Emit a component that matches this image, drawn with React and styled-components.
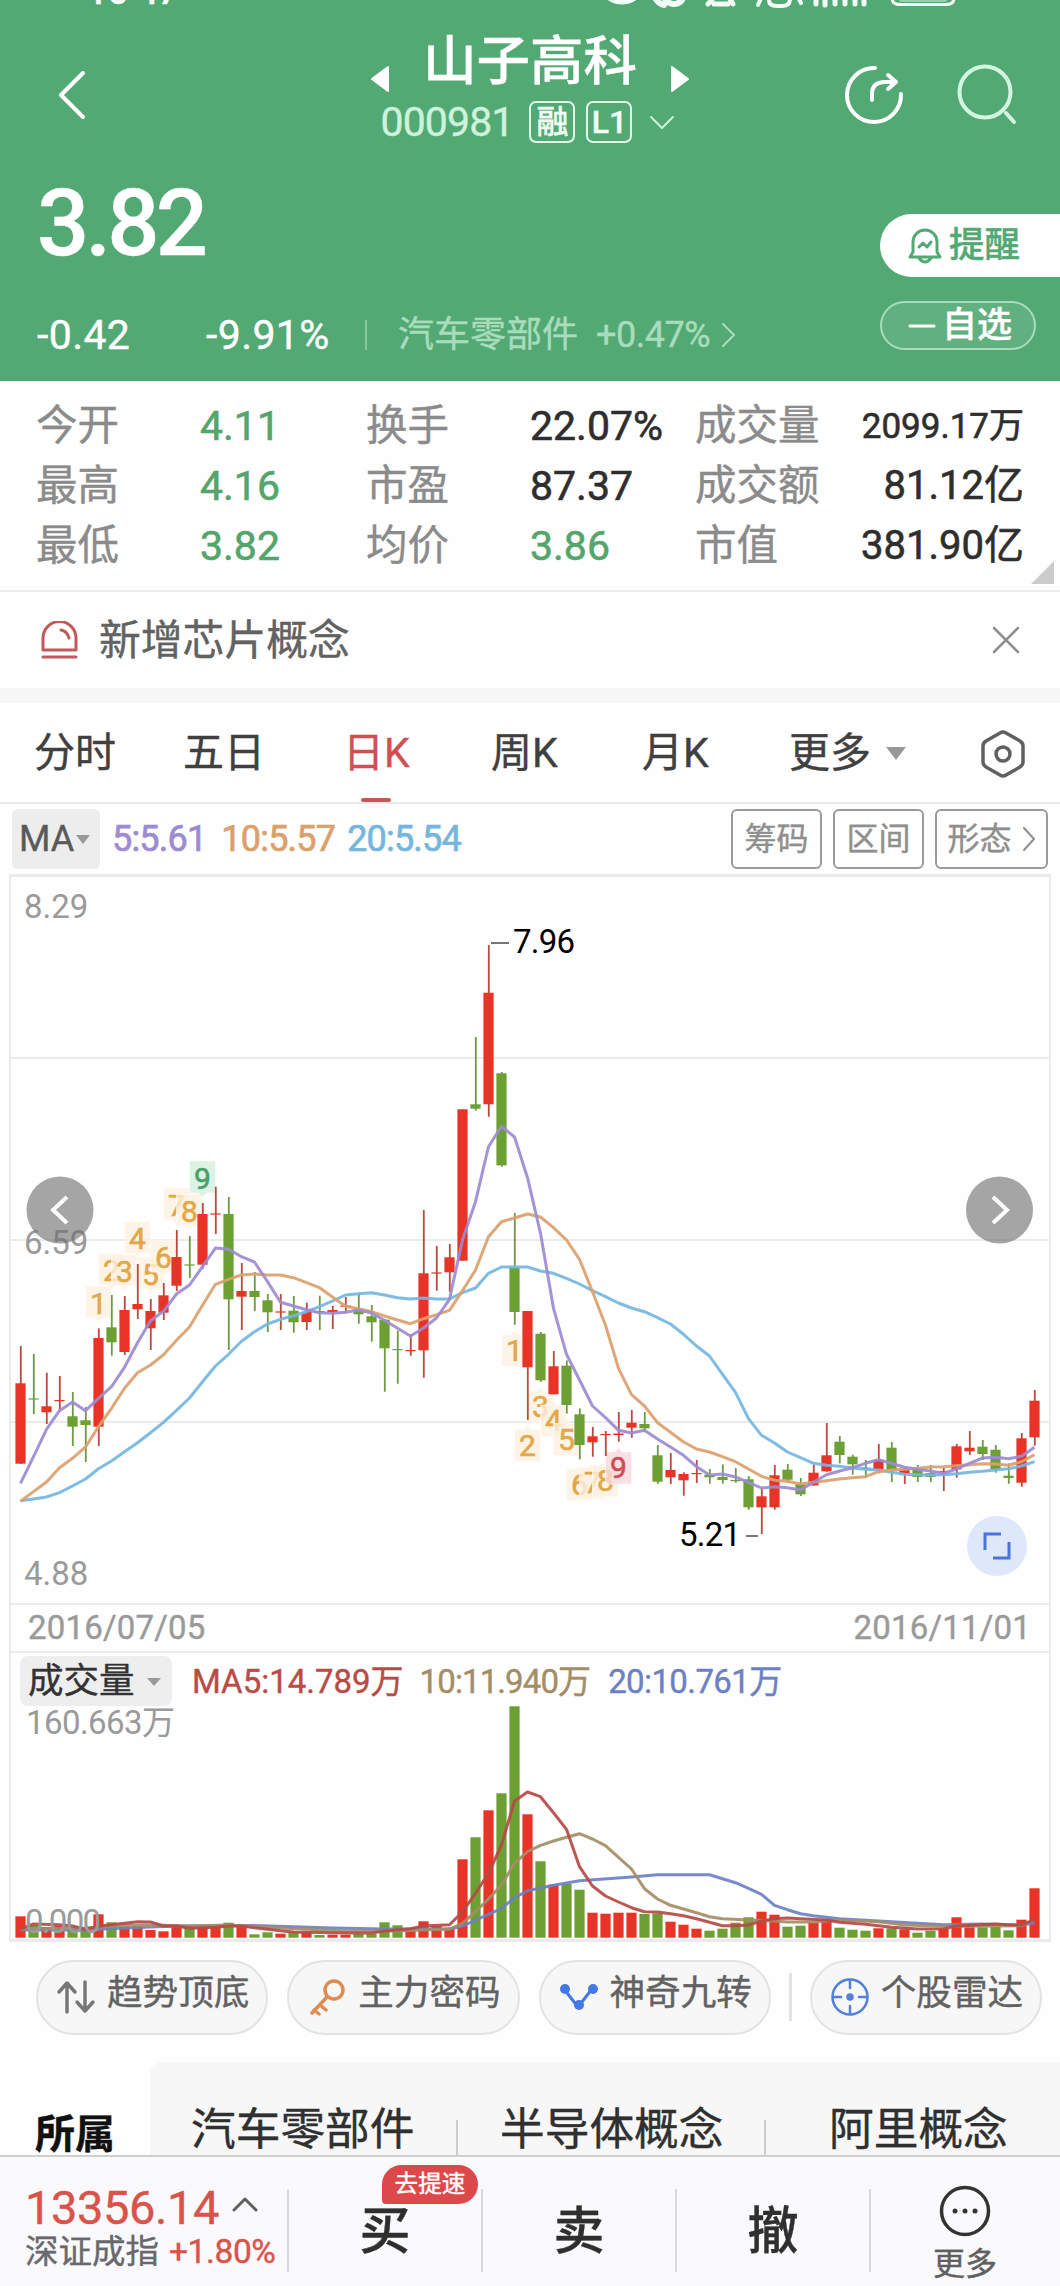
import React from 'react';
import styled, { createGlobalStyle } from 'styled-components';

const GlobalStyle = createGlobalStyle`
  * {
    box-sizing: border-box;
  }
  body {
    margin: 0;
    background: #fff;
    font-family: Roboto, 'Noto Sans CJK SC', sans-serif;
    line-height: 1;
    color: #333;
    -webkit-text-stroke: 0.4px;
  }
  svg {
    display: block;
    flex: none;
  }
`;

const UP = '#e73427';
const DOWN = '#6ca032';
const UP_WICK = '#b94a40';
const DOWN_WICK = '#6f9a44';

// [direction, high, low, bodyTop, bodyBottom]
const candles = [
  [1, 1346, 1463.7, 1383.3, 1463.7],
  [0, 1354, 1414, 1398.4, 1399.6],
  [1, 1372.7, 1424, 1406.3, 1412.3],
  [1, 1376, 1410, 1400, 1401.2],
  [0, 1392, 1446, 1416.3, 1426.7],
  [0, 1407, 1462, 1420.3, 1425],
  [1, 1328.3, 1446, 1338, 1426.7],
  [0, 1295, 1355.7, 1327.3, 1342.3],
  [1, 1296, 1355, 1310, 1352],
  [1, 1264, 1319, 1304, 1309.3],
  [1, 1299, 1350, 1311, 1328.3],
  [1, 1283, 1320, 1295.3, 1312.7],
  [1, 1230, 1291, 1257, 1285.7],
  [0, 1236, 1278, 1264.4, 1265.6],
  [1, 1203, 1268.7, 1214, 1264.7],
  [1, 1186.7, 1234, 1213.4, 1214.6],
  [0, 1197, 1350, 1214, 1299.3],
  [1, 1263, 1330, 1291, 1296.7],
  [0, 1272, 1311, 1291, 1297],
  [0, 1294, 1332, 1300.3, 1312.3],
  [1, 1294, 1330, 1311.4, 1312.6],
  [0, 1296, 1332.7, 1310.7, 1322.3],
  [1, 1302.7, 1330, 1312, 1322],
  [0, 1295.7, 1330, 1311, 1312.2],
  [1, 1305.7, 1329, 1310, 1312],
  [1, 1297, 1313.3, 1305.5, 1306.7],
  [0, 1294, 1323.7, 1309.3, 1314.3],
  [0, 1305, 1341.7, 1316.3, 1322.3],
  [0, 1319, 1391.7, 1319.7, 1348.3],
  [0, 1330.7, 1383.7, 1349, 1350.2],
  [1, 1334, 1355.7, 1350, 1351.2],
  [1, 1210, 1377.7, 1273.3, 1350.3],
  [1, 1246, 1290.7, 1272.4, 1273.6],
  [1, 1244, 1291.7, 1257.3, 1272.3],
  [1, 1109.3, 1260.7, 1109.3, 1260.7],
  [0, 1037, 1110.7, 1104.3, 1108.7],
  [1, 945, 1116.7, 992.7, 1104.3],
  [0, 1072, 1166.7, 1073.3, 1165.3],
  [0, 1213, 1324.7, 1267.7, 1312],
  [1, 1311, 1420, 1311, 1367.3],
  [0, 1332, 1381.7, 1333.7, 1380.3],
  [1, 1351, 1394.3, 1366.3, 1394.3],
  [0, 1360.3, 1413.7, 1365.7, 1405],
  [0, 1408.3, 1459.3, 1414.3, 1445],
  [1, 1427, 1456.7, 1436.3, 1442.3],
  [1, 1431, 1456, 1434, 1435.2],
  [1, 1412, 1441.7, 1433.5, 1435],
  [1, 1410, 1437.7, 1422.7, 1427.7],
  [0, 1412, 1432.3, 1424, 1428.3],
  [0, 1445, 1483.7, 1455.3, 1481.7],
  [1, 1453, 1484, 1470, 1477.3],
  [1, 1472.3, 1495.7, 1474, 1480.3],
  [1, 1460, 1483, 1473, 1474.2],
  [0, 1469, 1483.7, 1474.7, 1477.3],
  [0, 1464.3, 1483.7, 1477, 1480],
  [0, 1468, 1482.7, 1480, 1481.2],
  [0, 1476, 1509.7, 1479.3, 1507.3],
  [1, 1488.7, 1534, 1496.3, 1507.3],
  [1, 1465, 1509.7, 1475.3, 1507.3],
  [0, 1464, 1482.7, 1469.7, 1479.7],
  [0, 1478, 1496, 1483.7, 1494.3],
  [1, 1464.7, 1485.7, 1472.7, 1485.3],
  [1, 1423, 1471.7, 1455.3, 1471.3],
  [0, 1436, 1463.3, 1441.7, 1455],
  [0, 1454.7, 1474.7, 1456.7, 1464.3],
  [0, 1460, 1477.3, 1467.5, 1468.7],
  [1, 1444, 1473.3, 1460, 1469.7],
  [0, 1442, 1482, 1447.7, 1470],
  [1, 1466.7, 1484, 1469.3, 1474],
  [0, 1465, 1482, 1469.3, 1477],
  [0, 1465, 1482, 1473, 1477],
  [1, 1468, 1491, 1471, 1472.2],
  [1, 1444, 1477.7, 1446.3, 1469.3],
  [1, 1431, 1455, 1447.7, 1451.3],
  [0, 1440, 1460, 1446.7, 1454],
  [0, 1445, 1472.7, 1449.7, 1469.3],
  [0, 1463.3, 1483.7, 1475.7, 1478],
  [1, 1433, 1486.7, 1438.3, 1482.7],
  [1, 1390, 1445.7, 1400.7, 1437.3]
];

const volumes = [
  1916.3, 1925, 1927, 1926, 1928.5, 1928.5, 1914.3, 1922.3, 1927, 1926, 1930,
  1931.3, 1925, 1927, 1925, 1927, 1922.7, 1925.7, 1934.3, 1932.3, 1933.7, 1932,
  1932, 1935, 1934.7, 1934.7, 1934, 1934, 1922.3, 1925.3, 1930.7, 1921.3, 1926,
  1928, 1859.3, 1837.3, 1810.3, 1793.3, 1706.3, 1814.3, 1861.3, 1884.7, 1884,
  1889.7, 1912.7, 1913.7, 1912.7, 1912.7, 1914, 1913.3, 1921.7, 1924.7, 1928.7,
  1930.7, 1928.7, 1922.7, 1917.3, 1911.7, 1914.7, 1926.7, 1925.7, 1922.7,
  1919.3, 1927.7, 1929.7, 1930.7, 1928.3, 1928.3, 1929.3, 1932.7, 1930.7,
  1928.7, 1917.3, 1927.3, 1927.3, 1926.7, 1930.3, 1919.7, 1888.3
];

const ma5 = [
  1483.3, 1456.7, 1429.3, 1410.7, 1402, 1410.7, 1398.3, 1386.7, 1367.3, 1342.7,
  1320.7, 1311.3, 1294, 1285, 1266.7, 1248, 1249.3, 1256.7, 1262, 1281.7,
  1302.3, 1306, 1309.7, 1312.7, 1313.3, 1312.3, 1310, 1313, 1320.3, 1328.3,
  1336, 1328, 1318, 1299.3, 1240, 1201.7, 1146.7, 1126.3, 1137, 1177.7, 1233.3,
  1308.3, 1354.3, 1380, 1406, 1417.7, 1430.3, 1433, 1430.3, 1439, 1447, 1455.3,
  1466.7, 1475, 1474, 1477, 1482.3, 1488, 1486.7, 1487.7, 1490, 1482.3, 1474.7,
  1471, 1467.7, 1463.3, 1459.7, 1463.3, 1467.3, 1469.3, 1471, 1473.3, 1469,
  1463.3, 1458, 1457.3, 1458.7, 1456.3, 1447.3
];

const ma10 = [
  1501.3, 1491.6, 1482, 1467.7, 1458.3, 1447, 1426.7, 1408.3, 1388.3, 1372.7,
  1365, 1354.7, 1340.3, 1327, 1305.3, 1284.3, 1279.3, 1275, 1274, 1275, 1275,
  1277.7, 1282.7, 1287.7, 1297, 1306.3, 1308.7, 1311.7, 1316, 1320, 1323.7,
  1318.7, 1314.7, 1310.3, 1290.7, 1270, 1236.7, 1221.7, 1218, 1214, 1217,
  1227.7, 1240, 1259.3, 1291.7, 1325.3, 1368.3, 1394.7, 1406, 1422.7, 1432.3,
  1442, 1449, 1452, 1456.7, 1461.7, 1469, 1476.3, 1480.3, 1481.3, 1484, 1482.3,
  1480.7, 1479, 1477.7, 1476.7, 1471.7, 1470, 1469.3, 1468.3, 1467, 1466.7,
  1465.7, 1464.7, 1463.7, 1464, 1465.3, 1461.7, 1454.7
];

const ma20 = [
  1500.7, 1499, 1497, 1492.7, 1486, 1479, 1468.7, 1461, 1451.7, 1442.7, 1432.7,
  1422.3, 1410.3, 1398, 1381.7, 1366, 1354.3, 1341.3, 1331.7, 1324, 1319.3,
  1315.7, 1311.7, 1306.7, 1301, 1295, 1293.7, 1292.7, 1295, 1297.7, 1299, 1298,
  1299, 1299, 1292.7, 1288, 1273.3, 1267, 1267, 1267, 1271, 1273.3, 1278.3,
  1284, 1290.7, 1296.7, 1303, 1308, 1311.7, 1317.7, 1324, 1334.3, 1346, 1356,
  1374.3, 1392.3, 1418.7, 1435.3, 1443, 1452, 1457.7, 1463.3, 1465.3, 1466.3,
  1468, 1469.3, 1470, 1472.3, 1474.3, 1474.7, 1475, 1474.7, 1473.7, 1472.3,
  1471.3, 1470, 1468.7, 1466, 1461.7
];

// volume averages, [index, y]
const vol5 = [
  [0, 1929], [1, 1924], [3, 1924.7], [4, 1926], [5, 1929.3], [6, 1926.3],
  [8, 1923.3], [9, 1921.7], [10, 1922], [11, 1926], [12, 1926], [13, 1928.3],
  [15, 1927.3], [16, 1926], [17, 1926], [18, 1927.7], [20, 1930.7], [21, 1932],
  [25, 1933], [27, 1933], [28, 1931], [30, 1928.7], [31, 1926], [33, 1924.7],
  [34, 1911.7], [35, 1893.3], [36, 1873.3], [37, 1845], [38, 1801], [39, 1792],
  [40, 1796.7], [41, 1812.7], [42, 1829.3], [43, 1866.7], [44, 1886],
  [45, 1896], [46, 1902], [47, 1907.7], [48, 1911.7], [49, 1912], [50, 1913.7],
  [51, 1915.7], [52, 1918.7], [53, 1922.3], [54, 1925.7], [55, 1925.7],
  [56, 1925], [57, 1921], [58, 1918.7], [59, 1918], [60, 1918.7], [62, 1920],
  [63, 1922.3], [65, 1924.3], [66, 1925.7], [67, 1927.3], [69, 1929],
  [71, 1928.7], [72, 1926], [75, 1924], [76, 1924.7], [77, 1925], [78, 1919.3]
];

const vol10 = [
  [0, 1929], [5, 1928], [8, 1925.5], [10, 1925], [13, 1926], [16, 1925],
  [20, 1928], [25, 1931], [29, 1931], [33, 1929], [34, 1923.3], [35, 1911.7],
  [36, 1899], [37, 1885], [38, 1863.3], [39, 1851.7], [40, 1845.3], [41, 1841],
  [42, 1837.3], [43, 1833.7], [44, 1839], [45, 1845.7], [46, 1857.3],
  [47, 1869], [48, 1888.7], [49, 1899], [50, 1905.3], [51, 1909], [52, 1912.7],
  [53, 1916.7], [54, 1918.7], [56, 1920], [58, 1921], [59, 1922], [61, 1922],
  [63, 1920], [66, 1921.7], [68, 1925], [71, 1926.3], [75, 1926], [77, 1925.7],
  [78, 1920]
];

const vol20 = [
  [0, 1930], [5, 1930], [8, 1928], [12, 1926], [18, 1925.5], [24, 1928],
  [28, 1929], [33, 1929], [34, 1926], [36, 1914.3], [37, 1908.3], [38, 1897.7],
  [39, 1890.7], [41, 1885.3], [43, 1880.7], [47, 1877], [49, 1874.7],
  [53, 1874.7], [54, 1878.7], [55, 1882.7], [56, 1888.3], [57, 1894.3],
  [58, 1905.3], [59, 1909.7], [60, 1913.7], [61, 1915.7], [63, 1918.7],
  [66, 1921], [69, 1923.3], [71, 1924.7], [74, 1924], [77, 1925], [78, 1923]
];

// nine-turn marks: [label, candle index, box top]
const marksAbove = [
  ['1', 6, 1286], ['2', 7, 1253.3], ['3', 8, 1254.3], ['4', 9, 1221.3],
  ['5', 10, 1257], ['6', 11, 1240], ['7', 12, 1188], ['8', 13, 1194],
  ['9', 14, 1161]
];
const marksBelow = [
  ['1', 38, 1334.5], ['2', 39, 1429.5], ['3', 40, 1391], ['4', 41, 1405],
  ['5', 42, 1423.5], ['6', 43, 1469], ['7', 44, 1467], ['8', 45, 1465],
  ['9', 46, 1452]
];

const cx = i => 20.5 + i * 13;
const toPoints = ys => ys.map((y, i) => `${cx(i)},${y}`).join(' ');
const toSparsePoints = pts => pts.map(([i, y]) => `${cx(i)},${y}`).join(' ');

/* ---------- header ---------- */

const Page = styled.div`
  width: 1060px;
  height: 2286px;
  overflow: hidden;
  background: #fefefe;
`;

const Header = styled.header`
  height: 381px;
  background: #53a974;
  color: #fff;
`;

const StatusBar = styled.div`
  height: 8px;
  overflow: hidden;
  display: flex;
  align-items: flex-end;
  justify-content: space-between;
  padding: 0 80px 0 87px;
`;

const Clock = styled.span`
  font-size: 36px;
  font-weight: 500;
  line-height: 36px;
  margin-bottom: -2px;
  sup {
    font-size: 36px;
    line-height: 0;
    vertical-align: 8px;
  }
`;

const NavBar = styled.div`
  height: 152px;
  display: grid;
  grid-template-columns: 1fr 320px 1fr;
  padding: 0 43px;
`;

const NavSide = styled.div`
  display: flex;
  gap: 53px;
  padding-top: 56px;
  padding-left: 14px;
  justify-content: ${p => (p.$end ? 'flex-end' : 'flex-start')};
`;

const NavCenter = styled.div`
  display: flex;
  flex-direction: column;
  align-items: center;
  padding-top: 26px;
`;

const StockName = styled.div`
  display: flex;
  align-items: center;
  gap: 33px;
  height: 56px;
  font-size: 53.5px;
  font-weight: 500;
  svg {
    margin-top: 34px;
  }
`;

const StockCode = styled.div`
  display: flex;
  align-items: center;
  height: 42px;
  margin-top: 11px;
  margin-right: 5px;
  font-size: 41px;
  letter-spacing: -0.9px;
  color: #cdf3dc;
  svg {
    margin-left: 18px;
  }
`;

const Tag = styled.span`
  width: 46px;
  height: 42px;
  border: 2px solid #e2f8ea;
  border-radius: 7px;
  margin-left: ${p => p.$ml}px;
  display: flex;
  align-items: center;
  justify-content: center;
  font-size: 32px;
  font-weight: 500;
  letter-spacing: 0;
  color: #f0fff5;
`;

const Quote = styled.div`
  display: flex;
  justify-content: space-between;
  padding-left: 37px;
`;

const Price = styled.div`
  height: 124px;
  line-height: 128px;
  font-size: 92px;
  font-weight: 500;
  letter-spacing: -3.8px;
`;

const ChangeRow = styled.div`
  display: flex;
  align-items: center;
  height: 50px;
  margin-top: 26px;
  font-size: 41px;
`;

const Change = styled.span`
  width: ${p => p.$w}px;
  letter-spacing: 0.4px;
  white-space: nowrap;
`;

const Industry = styled.span`
  display: flex;
  align-items: center;
  height: 30px;
  padding-left: 31px;
  border-left: 2px solid #8ac7a0;
  font-size: 36px;
  color: #a9dcbc;
  span {
    margin: 0 11px 0 18px;
    letter-spacing: -0.5px;
  }
`;

const Pills = styled.div`
  width: 180px;
  padding-top: 54px;
`;

const RemindPill = styled.div`
  height: 63px;
  padding-left: 27px;
  border-radius: 32px 0 0 32px;
  background: #fff;
  color: #53a974;
  display: flex;
  align-items: center;
  gap: 6px;
  font-size: 35.5px;
  font-weight: 500;
`;

const WatchPill = styled.div`
  width: 156px;
  height: 49px;
  margin-top: 24px;
  border: 2px solid #a9dcbc;
  border-radius: 25px;
  background: #60b080;
  display: flex;
  align-items: center;
  gap: 6px;
  padding-left: 26px;
  font-size: 35px;
  font-weight: 500;
`;

/* ---------- stats / news ---------- */

const Stats = styled.div`
  height: 211px;
  padding: 15px 36px 0 36px;
  border-bottom: 2px solid #ececec;
  display: grid;
  grid-template-columns: 164px 166px 164px 165px 130px 1fr;
  grid-auto-rows: 60px;
  align-items: center;
  position: relative;
`;

const Corner = styled.i`
  position: absolute;
  right: 6px;
  bottom: 6px;
  border-left: 23px solid transparent;
  border-bottom: 23px solid #cbcbcb;
`;

const StatLabel = styled.span`
  font-size: 41.5px;
  color: #8b8b8b;
`;

const StatValue = styled.span`
  font-size: ${p => p.$size || 41}px;
  white-space: nowrap;
  -webkit-text-stroke: 0.6px;
  color: ${p => (p.$green ? '#53a56c' : '#2e2e2e')};
  justify-self: ${p => (p.$right ? 'end' : 'start')};
`;

const News = styled.div`
  height: 96px;
  display: flex;
  align-items: center;
  padding: 0 40px 0 41px;
  font-size: 41.8px;
  color: #626262;
  svg:last-child {
    margin-left: auto;
  }
  span {
    margin-left: 21px;
    padding-top: 2px;
  }
`;

const Gap = styled.div`
  height: 15px;
  background: #f7f7f7;
`;

/* ---------- chart ---------- */

const Tabs = styled.div`
  height: 101px;
  padding-left: 34px;
  border-bottom: 2px solid #e8e8e8;
  display: grid;
  grid-template-columns: 149px 160px 148px 151px 147px 192px auto;
  justify-items: start;
`;

const Tab = styled.div`
  height: 99px;
  display: flex;
  flex-direction: column;
  align-items: center;
  font-size: 41px;
  color: ${p => (p.$active ? '#cf4f52' : '#404040')};
  span {
    display: flex;
    align-items: center;
    height: 99px;
    padding-top: 2px;
  }
  &::after {
    content: '';
    flex: none;
    width: 30px;
    height: 4px;
    margin-top: -4px;
    border-radius: 2px;
    background: ${p => (p.$active ? '#c8555a' : 'transparent')};
  }
`;

const Caret = styled.i`
  margin-left: ${p => p.$ml || 0}px;
  border: ${p => p.$w / 2}px solid transparent;
  border-top: ${p => p.$h}px solid #999;
  border-bottom: 0;
`;

const MaRow = styled.div`
  height: 70px;
  padding: 5px 12px;
  display: flex;
  font-size: 36px;
  align-items: flex-start;
`;

const MaPicker = styled.div`
  width: 88px;
  height: 60px;
  border-radius: 6px;
  background: #ededed;
  color: #5a5a5a;
  display: flex;
  align-items: center;
  padding-left: 7px;
`;

const MaValue = styled.span`
  line-height: 60px;
  margin-left: ${p => p.$ml}px;
  letter-spacing: -0.8px;
  -webkit-text-stroke: 0.7px;
  color: ${p => p.$color};
`;

const Tools = styled.div`
  margin-left: auto;
  display: flex;
  gap: 11px;
`;

const ToolButton = styled.div`
  width: ${p => p.$w || 91}px;
  height: 60px;
  border: 2px solid #9a9a9a;
  border-radius: 6px;
  display: flex;
  align-items: center;
  justify-content: center;
  gap: 11px;
  font-size: 32px;
  color: #8f8f8f;
`;

const ChartFrame = styled.div`
  margin: 0 9px;
  border: 2px solid #ebebeb;
  border-width: 3px 2px;
`;

const DateRow = styled.div`
  height: 50px;
  border: solid #ebebeb;
  border-width: 2px 0;
  padding: 0 18px 2px 17px;
  display: flex;
  justify-content: space-between;
  align-items: center;
  font-size: 33px;
  letter-spacing: 0.2px;
  color: #9a9a9a;
`;

const VolumeHead = styled.div`
  height: 53px;
  padding: 3px 0 0 9px;
  display: flex;
  font-size: 33px;
`;

const VolumePicker = styled.div`
  width: 152px;
  height: 50px;
  border-radius: 8px;
  background: #eee;
  display: flex;
  align-items: center;
  padding: 2px 0 0 8px;
  font-size: 35.5px;
`;

const VolumeMa = styled.span`
  line-height: 52px;
  margin-left: ${p => p.$ml}px;
  letter-spacing: ${p => p.$ls || 0}px;
  white-space: nowrap;
  color: ${p => p.$color};
`;

/* ---------- bottom ---------- */

const Chips = styled.div`
  height: 120px;
  padding: 18px 18px 0 36px;
  display: flex;
  align-items: flex-start;
  gap: 19px;
`;

const Chip = styled.div`
  width: 232.5px;
  height: 75px;
  border: 2px solid #e3e3e3;
  border-radius: 38px;
  background: #f7f7f7;
  padding: 0 0 7px 18px;
  display: flex;
  align-items: center;
  font-size: 35.6px;
  color: #626262;
  svg {
    margin: 6px 11px 0 0;
  }
`;

const ChipDivider = styled.i`
  width: 3px;
  height: 48px;
  margin: 13px -1px 0 -1px;
  background: #e3e3e3;
`;

const Sectors = styled.div`
  height: 93px;
  display: flex;
`;

const Belong = styled.div`
  width: 150px;
  padding: 53px 0 0 35px;
  font-size: 40px;
  font-weight: 700;
  color: #111;
`;

const SectorList = styled.div`
  flex: 1;
  background: #f7f7f7;
  border-top-left-radius: 12px;
  display: grid;
  grid-template-columns: 308px 308px 1fr;
`;

const Sector = styled.div`
  height: 93px;
  padding: 46px 0 0 ${p => p.$pl}px;
  font-size: 44.7px;
  color: #303030;
  background: ${p =>
    p.$line
      ? 'linear-gradient(#ccc, #ccc) right bottom / 2px 35px no-repeat'
      : 'none'};
`;

const Footer = styled.footer`
  height: 131px;
  border-top: 2px solid #cfcfd2;
  background: #fafafc;
  display: grid;
  grid-template-columns: 289px 194px 194px 194px 1fr;
  & > div:not(:last-child) {
    background: linear-gradient(#d9d9dc, #d9d9dc) right 32px / 2px 83px
      no-repeat;
  }
`;

const IndexBox = styled.div`
  padding: 25px 0 0 25px;
`;

const IndexLine = styled.div`
  display: flex;
  align-items: center;
  white-space: nowrap;
  height: ${p => p.$h}px;
  font-size: ${p => p.$size}px;
  letter-spacing: ${p => p.$ls || 0}px;
  color: ${p => p.$color};
  svg {
    margin: -7px 0 0 13px;
  }
`;

const Rise = styled.span`
  margin-left: 10px;
  letter-spacing: -0.4px;
  color: #d9534a;
`;

const Trade = styled.div`
  display: flex;
  justify-content: center;
  padding: 49px 2px 0 0;
  font-size: 51px;
  font-weight: 500;
  color: #2f2f2f;
  position: relative;
`;

const Badge = styled.span`
  position: absolute;
  left: 93px;
  top: 8px;
  width: 96px;
  height: 39px;
  border-radius: 20px 20px 20px 4px;
  background: #dd484b;
  color: #fff;
  font-size: 23.6px;
  font-weight: 400;
  display: flex;
  align-items: center;
  justify-content: center;
`;

const More = styled.div`
  display: flex;
  flex-direction: column;
  align-items: center;
  padding: 28px 1px 0 0;
  gap: 11px;
  font-size: 32px;
  color: #606060;
`;

const Svg = ({ w, h, children, ...rest }) => (
  <svg
    width={w}
    height={h}
    viewBox={`0 0 ${w} ${h}`}
    fill="none"
    stroke="currentColor"
    strokeLinecap="round"
    strokeLinejoin="round"
    {...rest}
  >
    {children}
  </svg>
);

function Mark({ label, i, y, below }) {
  const last = label === '9';
  const x = cx(i);
  const fill = last ? (below ? '#f9d7dc' : '#d2efdf') : '#fdf1e1';
  const color = last ? (below ? '#cf4d58' : '#46a069') : '#e2a748';
  const d = below
    ? `M${x - 13} ${y}h9l4 -4l4 4h9v32h-26z`
    : `M${x - 13} ${y}h26v32h-9l-4 4l-4 -4h-9z`;
  return (
    <g>
      <path d={d} fill={fill} fillOpacity="0.8" stroke="#fff" strokeOpacity="0.6" />
      <text
        x={x}
        y={y + (below ? 26 : 27.5)}
        fontSize="30"
        textAnchor="middle"
        fill={color}
        stroke={color}
        strokeWidth="0.6"
      >
        {label}
      </text>
    </g>
  );
}

function PriceChart() {
  return (
    <svg width="1038" height="726" viewBox="11 877 1038 726">
      {[1058, 1240, 1422].map(y => (
        <rect key={y} x="11" y={y - 1} width="1038" height="2" fill="#ebebeb" />
      ))}
      <g fill="#9a9a9a" fontSize="33">
        <text x="24" y="918">8.29</text>
        <text x="24" y="1254">6.59</text>
        <text x="24" y="1585">4.88</text>
      </g>
      {marksAbove.map(([label, i, y]) => (
        <Mark key={i} label={label} i={i} y={y} />
      ))}
      {marksBelow.map(([label, i, y]) => (
        <Mark key={i} label={label} i={i} y={y} below />
      ))}
      {candles.map(([up, high, low, top, bottom], i) => (
        <g key={i}>
          <rect
            x={cx(i) - 0.6}
            y={high}
            width="1.8"
            height={low - high}
            fill={up ? UP_WICK : DOWN_WICK}
          />
          <rect
            x={cx(i) - 5.1}
            y={top}
            width="10.2"
            height={bottom - top}
            fill={up ? UP : DOWN}
          />
        </g>
      ))}
      <g fill="none" strokeWidth="3" strokeLinejoin="round" strokeOpacity="0.92">
        <polyline points={toPoints(ma20)} stroke="#74b6de" />
        <polyline points={toPoints(ma10)} stroke="#dba06c" />
        <polyline points={toPoints(ma5)} stroke="#9c8bd3" />
      </g>
      <path d="M491 943h18M746 1536h12" stroke="#777" strokeWidth="2" />
      <g fill="#000" fontSize="33">
        <text x="513" y="953" textLength="62">7.96</text>
        <text x="679" y="1546" textLength="62">5.21</text>
      </g>
      <g fill="none" stroke="#fff" strokeWidth="4">
        <circle cx="60" cy="1210" r="33.5" fill="#6e6e6e" fillOpacity="0.62" stroke="none" />
        <path d="M67 1197l-14 13l14 13" />
        <circle cx="999.5" cy="1210" r="33.5" fill="#6e6e6e" fillOpacity="0.62" stroke="none" />
        <path d="M993 1197l14 13l-14 13" />
      </g>
      <circle cx="997" cy="1546" r="30" fill="#dfe7fb" />
      <path
        d="M985 1550v-16h16M1009 1542v16h-16"
        fill="none"
        stroke="#4a74d9"
        strokeWidth="3"
      />
    </svg>
  );
}

function VolumeChart() {
  return (
    <svg width="1038" height="233" viewBox="11 1706 1038 233">
      {volumes.map((y, i) => (
        <rect
          key={i}
          x={cx(i) - 5.1}
          y={y}
          width="10.2"
          height={1937.7 - y}
          fill={candles[i][0] ? UP : DOWN}
        />
      ))}
      <g fill="none" strokeWidth="3" strokeLinejoin="round" strokeOpacity="0.92">
        <polyline points={toSparsePoints(vol20)} stroke="#6c80c4" />
        <polyline points={toSparsePoints(vol10)} stroke="#a48d66" />
        <polyline points={toSparsePoints(vol5)} stroke="#b54a45" />
      </g>
      <g fill="#9a9a9a" fontSize="33">
        <text x="26" y="1734" textLength="149">160.663万</text>
        <text x="25" y="1933" textLength="76">0.000</text>
      </g>
    </svg>
  );
}

const stats = [
  ['今开', '4.11', '换手', '22.07%', '成交量', '2099.17万'],
  ['最高', '4.16', '市盈', '87.37', '成交额', '81.12亿'],
  ['最低', '3.82', '均价', '3.86', '市值', '381.90亿']
];

export default function App() {
  return (
    <Page>
      <GlobalStyle />
      <Header>
        <StatusBar>
          <Clock>
            16<sup>:</sup>47
          </Clock>
          <Svg w={374} h={8} stroke="#f1fff6" strokeWidth="4">
            <path d="M-1 -10a17 12 0 0 0 34 0" strokeWidth="5" />
            <path d="M48 -4q4 8 10 9M56 -8q3 12 12 12q8 0 10 -9" strokeWidth="6" />
            <path d="M102 4q5 -6 8 -8M119 -6q5 4 8 10M108 4h14" strokeWidth="5" />
            <path d="M163 -3v3q0 6 8 6h5q8 0 8 -7M152 5l3 -7M192 -3l3 6" />
            <path d="M210 -4v8M219 -4v9M229 -4v8M239 -4v8M249 -4v8M258 -4v8" strokeWidth="5" />
            <path d="M286 -6v4q0 6.500 8 6.500h46q8 0 8 -6.500v-4" strokeWidth="3" />
            <path d="M295 0h44" stroke="#9ccdae" strokeWidth="4" />
          </Svg>
        </StatusBar>
        <NavBar>
          <NavSide>
            <Svg w={30} h={60} strokeWidth="4">
              <path d="M26 9L4 31l22 22" />
            </Svg>
          </NavSide>
          <NavCenter>
            <StockName>
              <Svg w={20} h={28} fill="#fff" strokeWidth="2">
                <path d="M18 2v24L2 14z" />
              </Svg>
              山子高科
              <Svg w={20} h={28} fill="#fff" strokeWidth="2">
                <path d="M2 2v24l16-12z" />
              </Svg>
            </StockName>
            <StockCode>
              000981
              <Tag $ml={16}>融</Tag>
              <Tag $ml={11}>L1</Tag>
              <Svg w={24} h={16} strokeWidth="2">
                <path d="M1 3l11 11l11-11" />
              </Svg>
            </StockCode>
          </NavCenter>
          <NavSide $end>
            <Svg w={60} h={62} strokeWidth="4">
              <path d="M31 4A27 27 0 1 0 57 30" />
              <path d="M28 36v-6q0-12 13-12h11M44 11l8 7l-8 7" />
            </Svg>
            <Svg w={60} h={62} strokeWidth="4" stroke="#d3f6e1">
              <circle cx="28" cy="28" r="25.5" />
              <path d="M49 49l8 9" />
            </Svg>
          </NavSide>
        </NavBar>
        <Quote>
          <div>
            <Price>3.82</Price>
            <ChangeRow>
              <Change $w={169}>-0.42</Change>
              <Change $w={159}>-9.91%</Change>
              <Industry>
                汽车零部件
                <span>+0.47%</span>
                <Svg w={16} h={24} strokeWidth="2">
                  <path d="M2 1l11 11L2 23" />
                </Svg>
              </Industry>
            </ChangeRow>
          </div>
          <Pills>
            <RemindPill>
              <Svg w={36} h={36} strokeWidth="3">
                <path d="M3 29l3-5V14a12 12 0 0 1 24 0v10l3 5z" />
                <path d="M12 30q6 8 12 0" />
                <path d="M12 19l4-4l4 4l4-5" />
              </Svg>
              提醒
            </RemindPill>
            <WatchPill>
              <Svg w={28} h={4} strokeWidth="3">
                <path d="M2 2h24" />
              </Svg>
              自选
            </WatchPill>
          </Pills>
        </Quote>
      </Header>

      <Stats>
        {stats.map(([a, av, b, bv, c, cv], row) => (
          <React.Fragment key={a}>
            <StatLabel>{a}</StatLabel>
            <StatValue $green>{av}</StatValue>
            <StatLabel>{b}</StatLabel>
            <StatValue $green={row === 2}>{bv}</StatValue>
            <StatLabel>{c}</StatLabel>
            <StatValue $right $size={row === 0 ? 35 : 40}>
              {cv}
            </StatValue>
          </React.Fragment>
        ))}
        <Corner />
      </Stats>
      <News>
        <Svg w={37} h={38} strokeWidth="3" stroke="#c05a5c">
          <path d="M2 29V17a16.500 16.500 0 0 1 33 0v12z" />
          <path d="M20 9q6 1 8 8M2 36h33" />
        </Svg>
        <span>新增芯片概念</span>
        <Svg w={28} h={28} strokeWidth="2.500" stroke="#8f8f8f">
          <path d="M2 2l24 24M26 2L2 26" />
        </Svg>
      </News>
      <Gap />

      <Tabs>
        <Tab><span>分时</span></Tab>
        <Tab><span>五日</span></Tab>
        <Tab $active><span>日K</span></Tab>
        <Tab><span>周K</span></Tab>
        <Tab><span>月K</span></Tab>
        <Tab>
          <span>
            更多
            <Caret $w={21} $h={13} $ml={15} />
          </span>
        </Tab>
        <Tab>
          <span>
            <Svg w={44} h={48} strokeWidth="3.500" stroke="#606060">
              <path d="M19 3q3-2 6 0l14 8q3 2 3 5v16q0 3-3 5l-14 8q-3 2-6 0l-14-8q-3-2-3-5V16q0-3 3-5z" />
              <circle cx="22" cy="24" r="7" />
            </Svg>
          </span>
        </Tab>
      </Tabs>
      <MaRow>
        <MaPicker>
          MA
          <Caret $w={14} $h={9} $ml={2} />
        </MaPicker>
        <MaValue $ml={12} $color="#9c8bd3">5:5.61</MaValue>
        <MaValue $ml={15} $color="#dba06c">10:5.57</MaValue>
        <MaValue $ml={12} $color="#74b6de">20:5.54</MaValue>
        <Tools>
          <ToolButton>筹码</ToolButton>
          <ToolButton>区间</ToolButton>
          <ToolButton $w={113}>
            形态
            <Svg w={13} h={24} strokeWidth="2">
              <path d="M1 1l10 11L1 23" />
            </Svg>
          </ToolButton>
        </Tools>
      </MaRow>

      <ChartFrame>
        <PriceChart />
        <DateRow>
          <span>2016/07/05</span>
          <span>2016/11/01</span>
        </DateRow>
        <VolumeHead>
          <VolumePicker>
            成交量
            <Caret $w={14} $h={8} $ml={12} />
          </VolumePicker>
          <VolumeMa $ml={20} $color="#b94b46">MA5:14.789万</VolumeMa>
          <VolumeMa $ml={16} $ls={-0.9} $color="#a48d66">10:11.940万</VolumeMa>
          <VolumeMa $ml={18} $ls={-0.6} $color="#6c80c4">20:10.761万</VolumeMa>
        </VolumeHead>
        <VolumeChart />
      </ChartFrame>

      <Chips>
        <Chip>
          <Svg w={40} h={34} strokeWidth="3.500" stroke="#777">
            <path d="M11 32V4M3 12l8-9l8 9M29 2v28M21 22l8 9l8-9" />
          </Svg>
          趋势顶底
        </Chip>
        <Chip>
          <Svg w={40} h={38} strokeWidth="3.500" stroke="#df8b52">
            <circle cx="27" cy="12" r="9" />
            <path d="M20 19L5 35M13 27l6 5M7 32l5 4" />
          </Svg>
          主力密码
        </Chip>
        <Chip>
          <Svg w={40} h={30} strokeWidth="3" stroke="#4478e6">
            <path d="M5 7l14 18L33 7" />
            <g fill="#4478e6" stroke="none">
              <circle cx="6" cy="7" r="5" />
              <circle cx="20" cy="23" r="5" />
              <circle cx="34" cy="7" r="5" />
            </g>
          </Svg>
          神奇九转
        </Chip>
        <ChipDivider />
        <Chip>
          <Svg w={40} h={40} strokeWidth="2.500" stroke="#5180dc">
            <circle cx="20" cy="20" r="17.500" />
            <path d="M20 3v8M20 29v8M3 20h8M29 20h8" />
            <circle cx="20" cy="20" r="2.500" fill="#5180dc" />
          </Svg>
          个股雷达
        </Chip>
      </Chips>

      <Sectors>
        <Belong>所属</Belong>
        <SectorList>
          <Sector $pl={41} $line>汽车零部件</Sector>
          <Sector $pl={42} $line>半导体概念</Sector>
          <Sector $pl={63}>阿里概念</Sector>
        </SectorList>
      </Sectors>

      <Footer>
        <IndexBox>
          <IndexLine $h={50} $size={47} $ls={-0.4} $color="#d9534a">
            13356.14
            <Svg w={26} h={16} strokeWidth="3" stroke="#606060">
              <path d="M2 14L13 3l11 11" />
            </Svg>
          </IndexLine>
          <IndexLine $h={40} $size={33.5} $color="#68686e">
            深证成指
            <Rise>+1.80%</Rise>
          </IndexLine>
        </IndexBox>
        <Trade>
          买
          <Badge>去提速</Badge>
        </Trade>
        <Trade>卖</Trade>
        <Trade>撤</Trade>
        <More>
          <Svg w={52} h={52} strokeWidth="3.500" stroke="#333">
            <circle cx="26" cy="26" r="23.500" />
            <g fill="#333" stroke="none">
              <circle cx="16" cy="26" r="2.500" />
              <circle cx="26" cy="26" r="2.500" />
              <circle cx="36" cy="26" r="2.500" />
            </g>
          </Svg>
          更多
        </More>
      </Footer>
    </Page>
  );
}
